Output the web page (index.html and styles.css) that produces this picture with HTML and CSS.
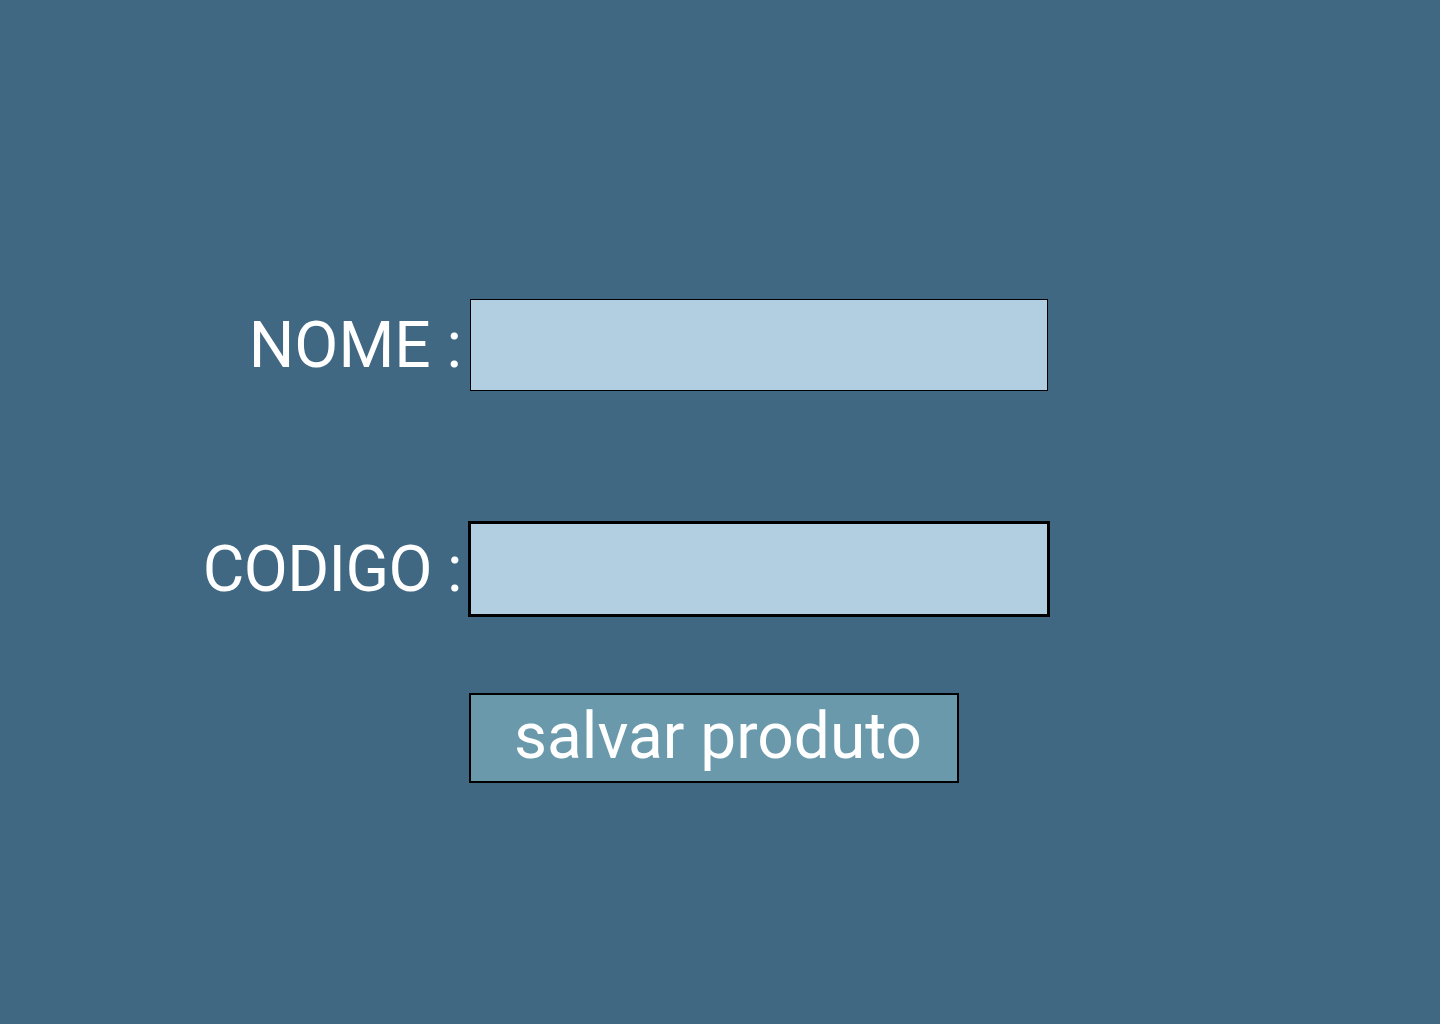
FILE: index.html
```html
<!DOCTYPE html>
<html lang="pt">
<head>
<meta charset="utf-8">
<title>Produto</title>
<link rel="stylesheet" href="styles.css">
</head>
<body>
<form class="form">
  <div class="row">
    <label class="label" for="nome">NOME :</label>
    <input class="field" id="nome" type="text">
  </div>
  <div class="row row-second">
    <label class="label label-tight" for="codigo">CODIGO :</label>
    <input class="field field-focus" id="codigo" type="text">
  </div>
  <div class="row row-button">
    <span class="label"></span>
    <button class="btn" type="button">salvar produto</button>
  </div>
</form>
</body>
</html>
```
FILE: styles.css
```css
html, body {
  margin: 0;
  padding: 0;
}
body {
  background: #406883;
  width: 1440px;
  height: 1024px;
  font-family: Roboto, "Liberation Sans", sans-serif;
  color: #ffffff;
}
.form {
  display: flex;
  flex-direction: column;
  padding-top: 299px;
}
.row {
  display: flex;
  align-items: center;
}
.row-second {
  margin-top: 132px;
}
.row-button {
  margin-top: 78px;
}
.label {
  width: 462px;
  box-sizing: border-box;
  padding-right: 0;
  text-align: right;
  font-size: 64px;
  color: #ffffff;
  flex: none;
}
.label-tight {
  letter-spacing: -0.6px;
  padding-right: 0;
}
.field {
  width: 578px;
  height: 92px;
  box-sizing: border-box;
  margin: 0 0 0 8px;
  padding: 0 10px;
  border: 1px solid #000000;
  background: #b1cfe1;
  font-family: Roboto, sans-serif;
  font-size: 40px;
  outline: none;
}
.field-focus {
  outline: 2px solid #000000;
  outline-offset: 0;
}
.btn {
  margin: 0 0 0 7px;
  width: 490px;
  height: 90px;
  box-sizing: border-box;
  border: 2px solid #000000;
  background: #6a99ab;
  color: #ffffff;
  font-family: Roboto, sans-serif;
  font-size: 64px;
  text-align: left;
  padding: 0 0 4px 43px;
  cursor: pointer;
}
```
